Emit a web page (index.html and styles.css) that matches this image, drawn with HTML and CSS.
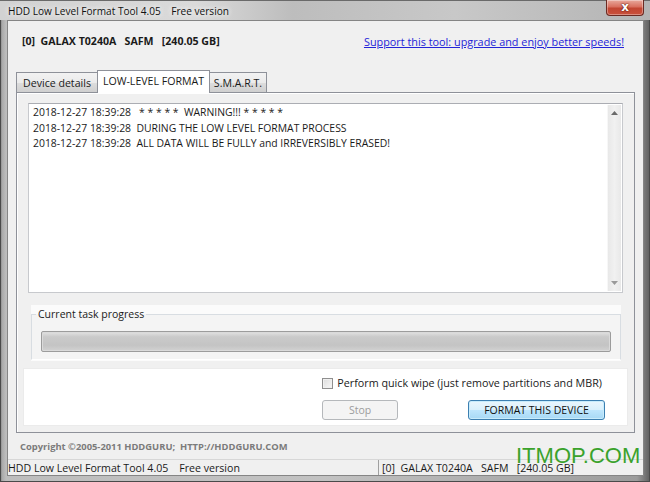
FILE: index.html
```html
<!DOCTYPE html>
<html>
<head>
<meta charset="utf-8">
<link rel="stylesheet" href="styles.css">
</head>
<body>
<div class="window">
  <div class="titlebar">
    <span class="title">HDD Low Level Format Tool 4.05    Free version</span>
    <div class="close"><span>x</span></div>
  </div>
  <div class="client">
    <div class="header">
      <span class="device">[0]  GALAX T0240A   SAFM   [240.05 GB]</span>
      <a class="support" href="#">Support this tool: upgrade and enjoy better speeds!</a>
    </div>
    <div class="tabs">
      <div class="tab tab-details">Device details</div>
      <div class="tab tab-active">LOW-LEVEL FORMAT</div>
      <div class="tab tab-smart">S.M.A.R.T.</div>
    </div>
    <div class="panel">
      <div class="log">
        <div class="log-lines">
          <div class="line">2018-12-27 18:39:28   * * * * *  WARNING!!! * * * * *</div>
          <div class="line">2018-12-27 18:39:28  DURING THE LOW LEVEL FORMAT PROCESS</div>
          <div class="line">2018-12-27 18:39:28  ALL DATA WILL BE FULLY and IRREVERSIBLY ERASED!</div>
        </div>
        <div class="scrollbar">
          <svg class="arrow" width="7" height="4" viewBox="0 0 7 4"><path d="M0 4 L3.5 0 L7 4 Z" fill="#6a6a6a"/></svg>
          <svg class="arrow" width="7" height="4" viewBox="0 0 7 4"><path d="M0 0 L3.5 4 L7 0 Z" fill="#9a9a9a"/></svg>
        </div>
      </div>
      <div class="group-wrap">
        <fieldset class="group">
          <legend>Current task progress</legend>
          <div class="progress"></div>
        </fieldset>
      </div>
      <div class="actions">
        <label class="quick"><span class="checkbox"></span>Perform quick wipe (just remove partitions and MBR)</label>
        <div class="buttons">
          <div class="btn btn-stop">Stop</div>
          <div class="btn btn-format">FORMAT THIS DEVICE</div>
        </div>
      </div>
    </div>
    <div class="copyright">Copyright ©2005-2011 HDDGURU;  HTTP://HDDGURU.COM</div>
    <div class="statusbar">
      <div class="pane pane-left">HDD Low Level Format Tool 4.05    Free version</div>
      <div class="pane pane-right">[0]  GALAX T0240A   SAFM   [240.05 GB]</div>
    </div>
  </div>
  <div class="watermark">ITMOP.COM</div>
</div>
</body>
</html>
```
FILE: styles.css
```css
* { box-sizing: border-box; margin: 0; padding: 0; }
html, body { width: 650px; height: 482px; overflow: hidden; }
body {
  font-family: "Open Sans", "Noto Sans", sans-serif;
  font-size: 10.5px;
  color: #1a1a1a;
  background: #8c8c8c;
}
.window {
  position: relative;
  width: 650px;
  height: 482px;
  display: flex;
  flex-direction: column;
  padding: 0 6px 6px 7px;
  background: linear-gradient(90deg, #6e6e6e 0, #a9a9a9 2px, #bdbdbd 6px, #c2c2c2 50%, #9c9c9c 98%, #5e5e5e 100%);
  box-shadow: inset 0 0 0 1px #4a4a4a;
}
.titlebar {
  height: 20px;
  display: flex;
  align-items: center;
  background: linear-gradient(90deg, #d2d2d2 0, #dadada 30%, #bdbdbd 45%, #c8c8c8 70%, #b4b4b4 100%);
  margin: 0 -6px 0 -7px;
  padding-left: 8px;
  border-top: 1px solid #6a6a6a;
}
.title {
  white-space: pre;
  font-size: 10.1px;
  color: #111;
  text-shadow: 0 0 6px #f2f2f2, 0 0 4px #f2f2f2;
}
.close {
  margin-left: auto;
  margin-right: 6px;
  align-self: flex-start;
  width: 38px;
  height: 16px;
  margin-top: -1px;
  border: 1px solid #6b2a22;
  border-top: none;
  border-radius: 0 0 4px 4px;
  background: linear-gradient(180deg, #e8a99c 0, #d9705f 45%, #c24632 55%, #c9513c 100%);
  box-shadow: inset 0 0 0 1px rgba(255,255,255,0.35);
  display: flex;
  align-items: center;
  justify-content: center;
}
.close span {
  font-family: "DejaVu Sans", sans-serif;
  font-weight: bold;
  font-size: 12px;
  line-height: 12px;
  color: #fff;
  text-shadow: 0 0 1px #5a1a10, 0 0 2px #5a1a10;
  margin-top: -2px;
}
.client {
  flex: 1;
  display: flex;
  flex-direction: column;
  background: #f0f0f0;
  border: 1px solid #858585;
}
.header {
  height: 40px;
  display: flex;
  align-items: center;
  justify-content: space-between;
  padding: 0 19px 0 14px;
}
.device {
  white-space: pre;
  font-weight: bold;
  font-size: 10.6px;
}
.support {
  color: #2424d8;
  text-decoration: underline;
  font-size: 10.85px;
}
.tabs {
  margin-top: 9px;
  height: 22px;
  display: flex;
  align-items: flex-end;
  padding-left: 8px;
  position: relative;
  z-index: 1;
}
.tab {
  height: 20px;
  display: flex;
  align-items: center;
  justify-content: center;
  border: 1px solid #8e9199;
  border-bottom: none;
  background: linear-gradient(180deg, #f2f2f2 0, #ebebeb 50%, #dddddd 51%, #cfcfcf 100%);
  font-size: 10.6px;
}
.tab-details { width: 81px; border-right: none; }
.tab-active {
  width: 113px;
  height: 23px;
  margin-bottom: -1px;
  background: #ffffff;
  padding-bottom: 2px;
}
.tab-smart { width: 57px; border-left: none; }
.panel {
  margin-left: 8px;
  width: 619px;
  height: 341px;
  border: 1px solid #8e9199;
  background: #f0f0f0;
  box-shadow: inset 1px 1px 0 #ffffff;
  padding: 10px 10px 0 11px;
  display: flex;
  flex-direction: column;
}
.log {
  height: 190px;
  width: 595px;
  border: 1px solid #c7c9cd;
  border-top-color: #abadb3;
  background: #ffffff;
  display: flex;
}
.log-lines {
  flex: 1;
  padding: 1px 0 0 4px;
}
.line {
  white-space: pre;
  line-height: 15.5px;
  font-size: 10.4px;
}
.scrollbar {
  width: 14px;
  margin: 1px;
  background: linear-gradient(90deg, #e8e8e8, #f1f1f1 50%, #e8e8e8);
  border-left: 1px solid #f7f7f7;
  display: flex;
  flex-direction: column;
  justify-content: space-between;
  align-items: center;
  padding: 6px 0 6px;
}
.arrow { display: block; }
.group-wrap {
  margin: 12px 0 0 3px;
  width: 590px;
  height: 56px;
  background: #fbfbfb;
  padding-top: 3px;
}
.group {
  height: 52px;
  border: 1px solid #d8dde2;
  border-bottom-color: #ffffff;
  background: #f4f4f4;
  padding: 11px 9px 0 9px;
  margin: 0;
}
.group legend {
  margin-left: -5px;
  padding: 0 2px;
  font-size: 10.5px;
  line-height: 12px;
}
.progress {
  height: 21px;
  border: 1px solid #9c9c9c;
  border-radius: 2px;
  background: linear-gradient(180deg, #e3e3e3 0, #cacaca 25%, #c4c4c4 70%, #d2d2d2 100%);
  box-shadow: inset 0 0 0 1px #dadada;
}
.actions {
  margin: 7px 0 0 -5px;
  width: 605px;
  height: 58px;
  background: #ffffff;
  border: 1px solid #ebebeb;
  display: flex;
  flex-direction: column;
  align-items: flex-end;
  padding: 7px 22px 0 0;
}
.quick {
  display: flex;
  align-items: center;
  height: 14px;
  font-size: 10.75px;
  padding-right: 3px;
}
.checkbox {
  width: 11px;
  height: 11px;
  border: 1px solid #8f8f8f;
  background: linear-gradient(135deg, #dcdcdc, #f8f8f8);
  box-shadow: inset 0 0 0 1px #f0f0f0;
  margin-right: 4px;
}
.buttons {
  margin-top: 10px;
  display: flex;
  gap: 70px;
}
.btn {
  height: 20px;
  display: flex;
  align-items: center;
  justify-content: center;
  border-radius: 3px;
  font-size: 10.5px;
}
.btn-stop {
  width: 76px;
  border: 1px solid #b5b8bb;
  background: #f4f4f4;
  color: #9c9c9c;
}
.btn-format {
  width: 137px;
  border: 1px solid #3c7fb1;
  background: linear-gradient(180deg, #eaf6fd 0, #d9f0fc 50%, #bee6fd 51%, #a7d9f5 100%);
  box-shadow: inset 0 0 0 1px #c8ecfc;
  color: #111;
}
.copyright {
  height: 26px;
  display: flex;
  align-items: center;
  padding-left: 12px;
  padding-top: 1px;
  white-space: pre;
  font-weight: bold;
  font-size: 9.4px;
  color: #7b7b7b;
}
.statusbar {
  flex: 1;
  display: flex;
  border-top: 1px solid #d7d7d7;
}
.pane {
  white-space: pre;
  display: flex;
  align-items: center;
  font-size: 10.6px;
}
.pane-left { width: 370px; }
.pane-right { border-left: 1px solid #a0a0a0; padding-left: 3px; }
.watermark {
  position: absolute;
  left: 516px;
  top: 443px;
  font-family: "Liberation Sans", Arial, sans-serif;
  font-size: 22px;
  color: #3aa22c;
  line-height: 26px;
}
```
